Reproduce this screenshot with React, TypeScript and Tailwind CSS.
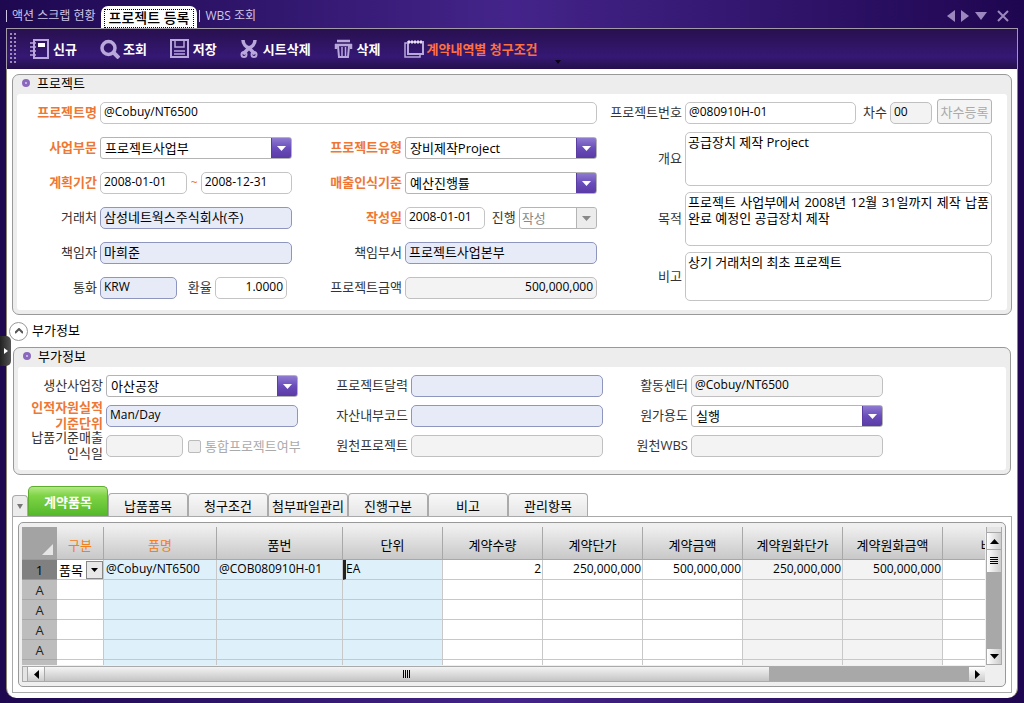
import { ReactNode } from "react";
import clsx from "clsx";

type LabelProps = {
  htmlFor: string;
  width: string;
  required?: boolean;
  children: ReactNode;
};

type TextProps = {
  id: string;
  value?: string;
  tone?: "plain" | "lookup" | "locked";
  className?: string;
};

type PickProps = {
  id: string;
  value: string;
  disabled?: boolean;
  className?: string;
};

type Column = {
  title: string;
  width: string;
  required?: boolean;
  cell?: string;
};

const TONES = {
  plain: "bg-white border-[#c4c4c4]",
  lookup: "bg-[#e7ebf8] border-[#8f96bd]",
  locked: "bg-[#f3f3f3] border-[#c0c0c0]",
};

const TABS = ["납품품목", "청구조건", "첨부파일관리", "진행구분", "비고", "관리항목"];

const COLUMNS: Column[] = [
  { title: "구분", width: "w-[47px]", required: true },
  { title: "품명", width: "w-[113px]", required: true, cell: "bg-[#def0fa]" },
  { title: "품번", width: "w-[126px]", cell: "bg-[#def0fa]" },
  { title: "단위", width: "w-[100px]", cell: "bg-[#def0fa]" },
  { title: "계약수량", width: "w-[100px]" },
  { title: "계약단가", width: "w-[100px]" },
  { title: "계약금액", width: "w-[100px]" },
  { title: "계약원화단가", width: "w-[100px]", cell: "bg-[#f3f3f3]" },
  { title: "계약원화금액", width: "w-[100px]", cell: "bg-[#f3f3f3]" },
  { title: "비고", width: "w-[100px]" },
];

const ITEM = [
  "품목",
  "@Cobuy/NT6500",
  "@COB080910H-01",
  "EA",
  "2",
  "250,000,000",
  "500,000,000",
  "250,000,000",
  "500,000,000",
  "",
];

function Label({ htmlFor, width, required, children }: LabelProps) {
  return (
    <label
      htmlFor={htmlFor}
      className={clsx(
        "shrink-0 pb-[2px] text-right text-[13px] leading-4 whitespace-nowrap",
        width,
        required ? "font-bold text-[#ee7733]" : "text-[#333]"
      )}
    >
      {children}
    </label>
  );
}

function Text({ id, value = "", tone = "plain", className }: TextProps) {
  return (
    <input
      id={id}
      type="text"
      defaultValue={value}
      readOnly={tone === "locked"}
      className={clsx(
        "h-[22px] min-w-0 rounded-[5px] border px-[3px] pb-[3px] text-black outline-none",
        TONES[tone],
        className ?? "flex-1 text-[13px]"
      )}
    />
  );
}

function Pick({ id, value, disabled, className = "flex-1" }: PickProps) {
  return (
    <div
      className={clsx(
        "flex h-[22px] min-w-0 overflow-hidden rounded-[3px] border border-[#b4b4b4] bg-white",
        className
      )}
    >
      <select
        id={id}
        disabled={disabled}
        className={clsx(
          "min-w-0 flex-1 appearance-none text-[13px] leading-5 outline-none",
          disabled ? "pl-[2px] text-[#888]" : "pl-1 text-black"
        )}
      >
        <option>{value}</option>
      </select>
      <span
        className={clsx(
          "-my-px -mr-px flex w-[21px] shrink-0 items-center justify-center rounded-r-[3px] border",
          disabled
            ? "border-[#b4b4b4] bg-[#ececec] text-[#888]"
            : "border-[#5a3da0] bg-linear-to-b from-[#8f7bd0] via-[#6a4dbb] to-[#5a3aa6] text-white"
        )}
      >
        <svg width="9" height="5" viewBox="0 0 9 5" fill="currentColor">
          <path d="M0 0h9L4.500 5z" />
        </svg>
      </span>
    </div>
  );
}

function Memo({ id, label, value, height }: { id: string; label: string; value: string; height: string }) {
  return (
    <div className="flex items-center gap-[3px]">
      <Label htmlFor={id} width="w-[85px]">
        {label}
      </Label>
      <textarea
        id={id}
        defaultValue={value}
        className={clsx(
          "min-w-0 flex-1 resize-none overflow-hidden rounded-[5px] border border-[#c4c4c4] bg-white px-[2px] pt-px text-justify text-[13px] leading-4 break-keep outline-none",
          height
        )}
      />
    </div>
  );
}

function Row({ children }: { children: ReactNode }) {
  return <div className="flex h-[22px] min-w-0 items-center gap-[3px]">{children}</div>;
}

function Panel({ title, className, children }: { title: string; className: string; children: ReactNode }) {
  return (
    <section className={clsx("rounded-[7px] border border-[#999] bg-[#ededed] px-1 pb-1", className)}>
      <h2 className="flex h-[19px] items-center gap-[7px] pb-[3px] pl-[5px] text-[13px] leading-4 text-black">
        <span className="h-2 w-2 rounded-full border-[3px] border-[#8a68bd] bg-[#d9cdf0]" />
        {title}
      </h2>
      <div className="rounded-[3px] bg-white">{children}</div>
    </section>
  );
}

function Tool({ label, hot, children }: { label: string; hot?: boolean; children: ReactNode }) {
  return (
    <button
      type="button"
      className={clsx(
        "flex items-center gap-[3px] text-[13px] leading-4 font-bold whitespace-nowrap",
        hot ? "text-[#ff7040]" : "text-white"
      )}
    >
      <svg width="20" height="20" viewBox="0 0 20 20" fill="none" stroke="#b9a8dc" strokeWidth="2">
        {children}
      </svg>
      {label}
    </button>
  );
}

function TitleBar() {
  return (
    <nav className="flex h-7 items-end justify-between pr-[9px] text-xs text-[#cfc6e6]">
      <div className="flex items-end">
        <span className="mb-[6px] h-3 w-px bg-[#cfc6e6]" />
        <button type="button" className="mr-[5px] mb-1 ml-[5px] h-4 leading-4">
          액션 스크랩 현황
        </button>
        <button
          type="button"
          className="h-[22px] rounded-t-[7px] bg-white px-[3px] pt-[3px] text-sm leading-4 font-medium text-black"
        >
          <span className="block h-[19px] border border-dotted border-black px-1">프로젝트 등록</span>
        </button>
        <span className="mb-[6px] ml-[2px] h-3 w-px bg-[#cfc6e6]" />
        <button type="button" className="mb-1 ml-[5px] h-4 leading-4">
          WBS 조회
        </button>
      </div>
      <div className="flex items-center gap-[6px] pb-[6px] text-[#9c88bf]">
        <button type="button" aria-label="이전">
          <svg width="8" height="12" viewBox="0 0 8 12" fill="currentColor">
            <path d="M8 0v12L0 6z" />
          </svg>
        </button>
        <button type="button" aria-label="다음">
          <svg width="8" height="12" viewBox="0 0 8 12" fill="currentColor">
            <path d="M0 0v12l8-6z" />
          </svg>
        </button>
        <button type="button" aria-label="목록">
          <svg width="12" height="8" viewBox="0 0 12 8" fill="currentColor">
            <path d="M0 0h12L6 8z" />
          </svg>
        </button>
        <button type="button" aria-label="닫기" className="ml-1">
          <svg width="12" height="12" viewBox="0 0 12 12" stroke="currentColor" strokeWidth="2">
            <path d="M1 1l10 10M11 1L1 11" />
          </svg>
        </button>
      </div>
    </nav>
  );
}

function Toolbar() {
  return (
    <div className="flex h-[41px] items-center border border-b-0 border-[#a29aa8] bg-linear-to-b from-[#28104f] via-[#351874] via-70% to-[#25104a] pb-px pl-[3px]">
      <svg width="8" height="32" viewBox="0 0 8 32" fill="#9d8cba" className="mr-3">
        {[0, 4, 8, 12, 16, 20, 24, 28].map((y) => (
          <g key={y}>
            <rect x="0" y={y} width="2" height="2" />
            <rect x="4" y={y} width="2" height="2" />
          </g>
        ))}
      </svg>
      <div className="flex gap-[23px]">
        <Tool label="신규">
          <path d="M4 1h14v18H4z" />
          <path d="M0 4h6M0 8h6M0 12h6M0 16h6" strokeWidth="1.500" />
          <path d="M8 6h7" stroke="#fff" strokeWidth="4" />
        </Tool>
        <Tool label="조회">
          <circle cx="8.500" cy="9" r="6.500" strokeWidth="3.500" />
          <path d="M13 13l6 6" strokeWidth="4" />
        </Tool>
        <Tool label="저장">
          <path d="M1 1h17v17H1z" />
          <path d="M5 2v6h9V2M4 12h11M4 15h11" strokeWidth="1.500" />
        </Tool>
        <Tool label="시트삭제">
          <path d="M3 1c0 4 3 7 6 8l6 6M15 1c0 4-3 7-6 8l-6 6" strokeWidth="3.500" />
          <circle cx="4" cy="15.500" r="2.500" />
          <circle cx="14" cy="15.500" r="2.500" />
        </Tool>
        <Tool label="삭제">
          <path d="M3 2h13M1 6h17M2 5v5M17 5v5" strokeWidth="2.500" />
          <path d="M4 7l1 11h9l1-11" />
          <path d="M8 8v9M11.500 8v9" strokeWidth="1.500" />
        </Tool>
        <Tool label="계약내역별 청구조건" hot>
          <path d="M4 3h15v12H4z" />
          <path d="M4 4H1v14h15v-3" strokeWidth="1.500" />
          <path d="M4 3h15" stroke="#e8e0f6" strokeWidth="3" strokeDasharray="2 1" />
        </Tool>
      </div>
      <svg width="6" height="4" viewBox="0 0 6 4" className="mb-1 ml-[17px] self-end">
        <path d="M0 0h6L3 4z" fill="#0c0418" />
      </svg>
    </div>
  );
}

function ProjectForm() {
  return (
    <Panel title="프로젝트" className="mx-[5px]">
      <div className="grid grid-cols-[580fr_395fr] pt-2 pr-[15px] pb-[9px]">
        <div className="flex min-w-0 flex-col gap-[13px]">
          <Row>
            <Label htmlFor="name" width="w-20" required>
              프로젝트명
            </Label>
            <Text id="name" value="@Cobuy/NT6500" className="flex-1 text-xs" />
          </Row>
          <div className="grid grid-cols-[275fr_305fr] gap-y-[13px]">
            <Row>
              <Label htmlFor="division" width="w-20" required>
                사업부문
              </Label>
              <Pick id="division" value="프로젝트사업부" />
            </Row>
            <Row>
              <Label htmlFor="type" width="w-[110px]" required>
                프로젝트유형
              </Label>
              <Pick id="type" value="장비제작Project" />
            </Row>
            <Row>
              <Label htmlFor="from" width="w-20" required>
                계획기간
              </Label>
              <Text id="from" value="2008-01-01" className="flex-[87] text-xs" />
              <label htmlFor="to" className="w-2 text-right text-xs text-[#ee7733]">
                ~
              </label>
              <Text id="to" value="2008-12-31" className="flex-[92] text-xs" />
            </Row>
            <Row>
              <Label htmlFor="basis" width="w-[110px]" required>
                매출인식기준
              </Label>
              <Pick id="basis" value="예산진행률" />
            </Row>
            <Row>
              <Label htmlFor="customer" width="w-20">
                거래처
              </Label>
              <Text id="customer" value="삼성네트웍스주식회사(주)" tone="lookup" />
            </Row>
            <Row>
              <Label htmlFor="written" width="w-[110px]" required>
                작성일
              </Label>
              <Text id="written" value="2008-01-01" className="flex-[77] text-xs" />
              <Label htmlFor="progress" width="w-7">
                진행
              </Label>
              <Pick id="progress" value="작성" disabled className="flex-[82]" />
            </Row>
            <Row>
              <Label htmlFor="owner" width="w-20">
                책임자
              </Label>
              <Text id="owner" value="마희준" tone="lookup" />
            </Row>
            <Row>
              <Label htmlFor="dept" width="w-[110px]">
                책임부서
              </Label>
              <Text id="dept" value="프로젝트사업본부" tone="lookup" />
            </Row>
            <Row>
              <Label htmlFor="currency" width="w-20">
                통화
              </Label>
              <Text id="currency" value="KRW" tone="lookup" className="flex-[77] text-xs" />
              <Label htmlFor="rate" width="w-8">
                환율
              </Label>
              <Text id="rate" value="1.0000" className="mr-[5px] flex-[72] text-right text-xs" />
            </Row>
            <Row>
              <Label htmlFor="amount" width="w-[110px]">
                프로젝트금액
              </Label>
              <Text id="amount" value="500,000,000" tone="locked" className="flex-1 text-right text-xs" />
            </Row>
          </div>
        </div>
        <div className="flex min-w-0 flex-col gap-[6px]">
          <div className="mb-[2px] flex h-[22px] items-end gap-[3px]">
            <Label htmlFor="number" width="w-[85px]">
              <span className="block pb-[2px]">프로젝트번호</span>
            </Label>
            <Text id="number" value="@080910H-01" className="flex-1 text-xs" />
            <Label htmlFor="degree" width="w-7">
              <span className="block pb-[2px]">차수</span>
            </Label>
            <Text id="degree" value="00" tone="locked" className="w-[42px] text-xs" />
            <button
              type="button"
              disabled
              className="ml-[2px] h-[25px] w-[55px] rounded-[3px] border border-[#b4b4b4] bg-[#f4f4f4] text-[13px] leading-4 whitespace-nowrap text-[#aaa]"
            >
              차수등록
            </button>
          </div>
          <Memo id="summary" label="개요" value="공급장치 제작 Project" height="h-[54px]" />
          <Memo
            id="purpose"
            label="목적"
            value="프로젝트 사업부에서 2008년 12월 31일까지 제작 납품 완료 예정인 공급장치 제작"
            height="h-[54px]"
          />
          <Memo id="remark" label="비고" value="상기 거래처의 최초 프로젝트" height="h-[49px]" />
        </div>
      </div>
    </Panel>
  );
}

function ExtraForm() {
  return (
    <Panel title="부가정보" className="mx-[6px]">
      <div className="grid grid-cols-[280fr_305fr_280fr_123fr] pt-2 pb-[13px]">
        <div className="flex min-w-0 flex-col gap-2">
          <Row>
            <Label htmlFor="plant" width="w-[85px]">
              생산사업장
            </Label>
            <Pick id="plant" value="아산공장" />
          </Row>
          <Row>
            <Label htmlFor="unit" width="w-[85px]" required>
              인적자원실적
              <br />
              기준단위
            </Label>
            <Text id="unit" value="Man/Day" tone="lookup" className="flex-1 text-xs" />
          </Row>
          <Row>
            <Label htmlFor="recognized" width="w-[85px]">
              납품기준매출
              <br />
              인식일
            </Label>
            <Text id="recognized" tone="locked" className="w-[77px] shrink-0 text-xs" />
            <label className="ml-[2px] flex items-center gap-1 text-[13px] leading-4 whitespace-nowrap text-[#aaa]">
              <input
                type="checkbox"
                disabled
                className="h-[13px] w-[13px] appearance-none rounded-[2px] border border-[#bbb] bg-[#eee]"
              />
              통합프로젝트여부
            </label>
          </Row>
        </div>
        <div className="flex min-w-0 flex-col gap-2">
          <Row>
            <Label htmlFor="calendar" width="w-[110px]">
              프로젝트달력
            </Label>
            <Text id="calendar" tone="lookup" />
          </Row>
          <Row>
            <Label htmlFor="asset" width="w-[110px]">
              자산내부코드
            </Label>
            <Text id="asset" tone="lookup" />
          </Row>
          <Row>
            <Label htmlFor="origin" width="w-[110px]">
              원천프로젝트
            </Label>
            <Text id="origin" tone="locked" />
          </Row>
        </div>
        <div className="flex min-w-0 flex-col gap-2">
          <Row>
            <Label htmlFor="center" width="w-[85px]">
              활동센터
            </Label>
            <Text id="center" value="@Cobuy/NT6500" tone="locked" className="flex-1 text-xs" />
          </Row>
          <Row>
            <Label htmlFor="usage" width="w-[85px]">
              원가용도
            </Label>
            <Pick id="usage" value="실행" />
          </Row>
          <Row>
            <Label htmlFor="wbs" width="w-[85px]">
              원천WBS
            </Label>
            <Text id="wbs" tone="locked" />
          </Row>
        </div>
      </div>
    </Panel>
  );
}

function ItemTable() {
  return (
    <table className="w-[1021px] table-fixed border-separate border-spacing-0 text-xs leading-4">
      <thead>
        <tr className="h-[33px]">
          <th className="w-[35px] border-b border-[#999] bg-[#a3a3a3] p-0 pr-1 pb-1 align-bottom">
            <svg width="11" height="11" viewBox="0 0 11 11" className="ml-auto">
              <path d="M11 0v11H0z" fill="#e6e6e6" />
            </svg>
          </th>
          {COLUMNS.map((col) => (
            <th
              key={col.title}
              className={clsx(
                "border-r border-b border-[#a8a8a8] bg-linear-to-b from-[#efefef] to-[#c8c8c8] p-0 pt-[3px] text-[13px] font-normal whitespace-nowrap",
                col.width,
                col.required ? "text-[#f08020]" : "text-black"
              )}
            >
              {col.title}
            </th>
          ))}
        </tr>
      </thead>
      <tbody>
        <tr className="h-5">
          <th className="border-b border-[#999] bg-[#808080] p-0 text-[13px] font-normal">1</th>
          {ITEM.map((value, i) => (
            <td
              key={i}
              className={clsx(
                "border-r border-b border-[#c8c8c8] p-0 whitespace-nowrap",
                COLUMNS[i].cell ?? "bg-white",
                i > 0 && "pb-[2px]",
                i > 3 ? "pr-px text-right" : i !== 3 && "pl-[2px]",
                i === 3 && "border-l-[3px] border-l-[#222]"
              )}
            >
              {i === 0 ? (
                <span className="flex items-center justify-between text-[13px]">
                  {value}
                  <button
                    type="button"
                    aria-label="구분 선택"
                    className="flex h-[18px] w-[17px] items-center justify-center border border-[#888] bg-[#e8e8e8]"
                  >
                    <svg width="7" height="4" viewBox="0 0 7 4">
                      <path d="M0 0h7L3.500 4z" />
                    </svg>
                  </button>
                </span>
              ) : (
                value
              )}
            </td>
          ))}
        </tr>
        {[1, 2, 3, 4, 5].map((row) => (
          <tr key={row} className="h-5">
            <th className="border-b border-[#a8a8a8] bg-[#bdbdbd] p-0 text-[13px] font-normal text-[#222]">
              {row < 5 && "A"}
            </th>
            {COLUMNS.map((col) => (
              <td key={col.title} className={clsx("border-r border-b border-[#c8c8c8] p-0", col.cell ?? "bg-white")} />
            ))}
          </tr>
        ))}
      </tbody>
    </table>
  );
}

function VerticalBar() {
  return (
    <div className="flex h-[138px] w-4 flex-col border-x border-[#aaa] bg-[#a8a8a8]">
      <span className="h-[5px] bg-[#e4e4e4]" />
      <button type="button" aria-label="위로" className="mt-px flex h-4 items-center justify-center bg-linear-to-r from-white to-[#ccc]">
        <svg width="9" height="5" viewBox="0 0 9 5">
          <path d="M0 5h9L4.500 0z" />
        </svg>
      </button>
      <span className="mt-px flex h-[22px] items-center justify-center bg-linear-to-r from-white to-[#ccc]">
        <svg width="8" height="8" viewBox="0 0 8 8" stroke="#000" shapeRendering="crispEdges">
          <path d="M0 .5h8M0 2.500h8M0 4.500h8M0 6.500h8" />
        </svg>
      </span>
      <button type="button" aria-label="아래로" className="mt-auto mb-px flex h-[15px] items-center justify-center bg-linear-to-r from-white to-[#ccc]">
        <svg width="9" height="5" viewBox="0 0 9 5">
          <path d="M0 0h9L4.500 5z" />
        </svg>
      </button>
    </div>
  );
}

function HorizontalBar() {
  return (
    <div className="mr-[17px] flex h-4 border-y border-[#aaa] bg-[#a8a8a8]">
      <span className="w-[5px] border-l border-[#aaa] bg-[#e4e4e4]" />
      <button type="button" aria-label="왼쪽" className="ml-px flex w-4 items-center justify-center bg-linear-to-b from-white to-[#ccc]">
        <svg width="5" height="9" viewBox="0 0 5 9">
          <path d="M5 0v9L0 4.500z" />
        </svg>
      </button>
      <span className="ml-px flex flex-[724] items-center justify-center bg-linear-to-b from-[#f4f4f4] to-[#c4c4c4]">
        <svg width="8" height="8" viewBox="0 0 8 8" stroke="#000" shapeRendering="crispEdges">
          <path d="M.5 0v8M2.500 0v8M4.500 0v8M6.500 0v8" />
        </svg>
      </span>
      <span className="flex-[200]" />
      <button type="button" aria-label="오른쪽" className="flex w-4 items-center justify-center bg-linear-to-b from-white to-[#ccc]">
        <svg width="5" height="9" viewBox="0 0 5 9">
          <path d="M0 0v9l5-4.500z" />
        </svg>
      </button>
    </div>
  );
}

function ItemSection() {
  return (
    <section className="mx-[5px] mt-[11px]">
      <div className="flex items-end">
        <button
          type="button"
          aria-label="탭 목록"
          className="flex h-[21px] w-4 items-center justify-center rounded-t-[4px] border border-b-0 border-[#aaa] bg-[#ececec]"
        >
          <svg width="6" height="5" viewBox="0 0 6 5" fill="#777">
            <path d="M0 0h6L3 5z" />
          </svg>
        </button>
        <button
          type="button"
          className="h-[30px] w-20 rounded-t-[5px] border border-b-0 border-[#5cae2c] bg-linear-to-b from-[#b4e884] via-[#7fd445] via-30% to-[#52b82a] pt-px text-[13px] leading-4 font-bold text-white"
        >
          계약품목
        </button>
        {TABS.map((tab) => (
          <button
            key={tab}
            type="button"
            className="h-[23px] w-20 rounded-t-[4px] border border-b-0 border-[#aaa] bg-linear-to-b from-[#f8f8f8] to-[#e6e6e6] pt-[2px] text-[13px] leading-4 whitespace-nowrap text-black"
          >
            {tab}
          </button>
        ))}
      </div>
      <div className="border border-[#aaa] p-[5px]">
        <div className="rounded-[5px] border border-[#999] bg-[#efefef] p-[3px] pt-1 pb-1">
          <div className="flex gap-px">
            <div className="h-[138px] min-w-0 flex-1 overflow-hidden">
              <ItemTable />
            </div>
            <VerticalBar />
          </div>
          <div className="pt-px">
            <HorizontalBar />
          </div>
        </div>
      </div>
    </section>
  );
}

export default function App() {
  return (
    <div className="relative min-h-screen bg-linear-to-r from-[#1e0850] via-[#44248a] to-[#1f0650] px-[6px] pb-[5px] font-['Open_Sans','Noto_Sans_CJK_KR',sans-serif]">
      <TitleBar />
      <Toolbar />
      <main className="rounded-b-[10px] border-x border-[#8a8470] bg-white pt-[5px] pb-[5px]">
        <ProjectForm />
        <div className="flex h-8 items-center gap-1 pl-[2px] text-[13px] text-black">
          <button
            type="button"
            aria-label="부가정보 접기"
            className="flex h-[19px] w-[19px] items-center justify-center rounded-full border border-[#999] bg-white"
          >
            <svg width="8" height="6" viewBox="0 0 8 6" fill="none" stroke="#555" strokeWidth="2">
              <path d="M0 5l4-4 4 4" />
            </svg>
          </button>
          부가정보
        </div>
        <ExtraForm />
        <ItemSection />
      </main>
      <button
        type="button"
        aria-label="메뉴 열기"
        className="absolute top-[336px] left-0 flex h-[30px] w-[11px] items-center justify-center rounded-r-[5px] bg-linear-to-r from-[#222] to-[#555]"
      >
        <svg width="4" height="6" viewBox="0 0 4 6" fill="#fff">
          <path d="M0 0v6l4-3z" />
        </svg>
      </button>
    </div>
  );
}
